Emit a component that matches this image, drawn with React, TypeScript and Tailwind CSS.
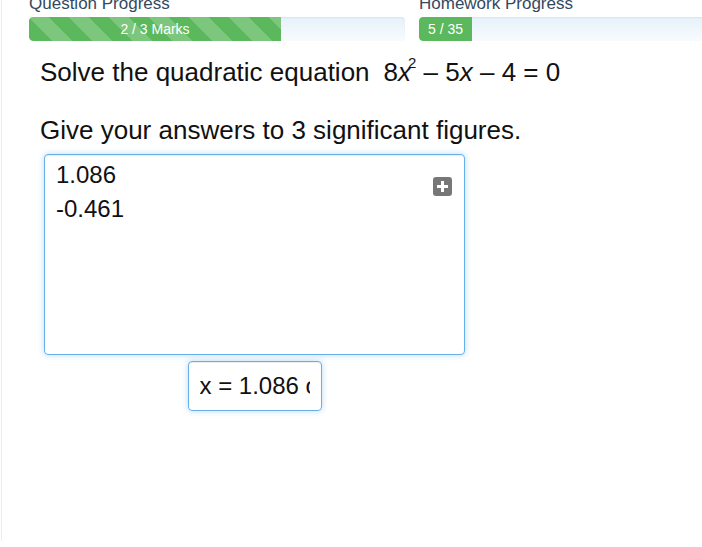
import React from 'react';

const stripes =
  'bg-[linear-gradient(45deg,rgba(255,255,255,.2)_25%,transparent_25%,transparent_50%,rgba(255,255,255,.2)_50%,rgba(255,255,255,.2)_75%,transparent_75%,transparent)] bg-[length:40px_40px]';

interface ProgressProps {
  title: string;
  label: string;
  fill: number;
  striped?: boolean;
}

const ProgressBlock: React.FC<ProgressProps> = ({ title, label, fill, striped }) => (
  <div className="w-[376px] shrink-0">
    <div className="text-[17px] leading-[20px] text-[#34495e] mb-[3px]">{title}</div>
    <div className="h-[24px] rounded-[4px] bg-[linear-gradient(to_bottom,#e6f1fa,#f8fbfe)] shadow-[inset_0_1px_2px_rgba(0,0,0,.06)] overflow-hidden">
      <div
        className={`h-full rounded-l-[4px] bg-[#5cb85c] text-white text-[14px] leading-[24px] text-center ${striped ? stripes : ''}`}
        style={{ width: fill }}
      >
        {label}
      </div>
    </div>
  </div>
);

const PlusIcon = () => (
  <div className="absolute right-[12px] top-[22px] w-[19px] h-[19px] rounded-[3px] bg-[#777] flex items-center justify-center">
    <svg width="13" height="13" viewBox="0 0 13 13">
      <rect x="5" y="1" width="3" height="11" fill="#fff" />
      <rect x="1" y="5" width="11" height="3" fill="#fff" />
    </svg>
  </div>
);

export default function App() {
  return (
    <div className="w-[702px] h-[547px] overflow-hidden bg-white font-['Liberation_Sans',Arial,sans-serif]">
      <div className="ml-px h-full border-l border-[#ececec]">
        <div className="flex gap-[14px] pl-[27px] mt-[-6px]">
          <ProgressBlock title="Question Progress" label="2 / 3 Marks" fill={252} striped />
          <ProgressBlock title="Homework Progress" label="5 / 35" fill={53} />
        </div>

        <div className="ml-[38px] mt-[16px] text-[26px] leading-[30px] text-[#111]">
          <div>
            Solve the quadratic equation
            <span className="ml-[14px]">
              8<i>x</i>
              <sup className="text-[15px] relative top-[-13px] ml-[-3px]">2</sup> – 5<i>x</i> – 4 = 0
            </span>
          </div>
          <div className="mt-[28px]">Give your answers to 3 significant figures.</div>
        </div>

        <div className="ml-[42px] mt-[9px] w-[421px] flex flex-col items-center">
          <div className="relative w-full h-[201px] rounded-[4px] border border-[#66afe9] shadow-[inset_0_1px_1px_rgba(0,0,0,.075),0_0_6px_rgba(102,175,233,.45)] pt-[3px] pl-[11px] text-[24px] leading-[34px] text-[#111]">
            <div>1.086</div>
            <div>-0.461</div>
            <PlusIcon />
          </div>
          <div className="mt-[6px] w-[134px] h-[50px] rounded-[4px] border border-[#66afe9] shadow-[inset_0_1px_1px_rgba(0,0,0,.075),0_0_6px_rgba(102,175,233,.45)] px-[11px] overflow-hidden whitespace-nowrap text-[24px] leading-[48px] text-[#111]">
            <div className="overflow-hidden">x = 1.086 or -0.461</div>
          </div>
        </div>
      </div>
    </div>
  );
}
